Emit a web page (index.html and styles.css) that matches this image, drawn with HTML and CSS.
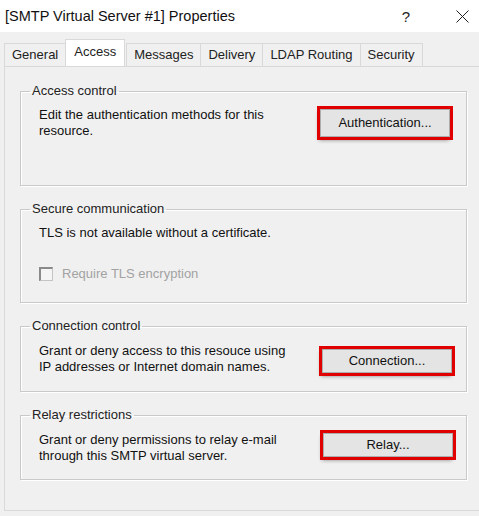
FILE: index.html
```html
<!DOCTYPE html>
<html lang="en">
<head>
  <meta charset="UTF-8">
  <title>[SMTP Virtual Server #1] Properties</title>
  <link rel="stylesheet" href="styles.css">
</head>
<body>
  <div class="titlebar">
    <div class="title">[SMTP Virtual Server #1] Properties</div>
    <div class="help">?</div>
    <div class="close">
      <svg width="13" height="13" viewBox="0 0 13 13">
        <path d="M0.5 0.5 L12.5 12.5 M12.5 0.5 L0.5 12.5" stroke="#222" stroke-width="1" fill="none"/>
      </svg>
    </div>
  </div>

  <div class="tabs">
    <div class="tab">General</div>
    <div class="tab active">Access</div>
    <div class="tab">Messages</div>
    <div class="tab">Delivery</div>
    <div class="tab">LDAP Routing</div>
    <div class="tab">Security</div>
  </div>

  <div class="panel">
    <!-- Access control -->
    <fieldset class="group group-access">
      <legend>Access control</legend>
      <div class="row">
        <div class="desc">Edit the authentication methods for this<br>resource.</div>
        <div class="btn btn-tall">Authentication...</div>
      </div>
    </fieldset>

    <!-- Secure communication -->
    <fieldset class="group group-secure">
      <legend>Secure communication</legend>
      <div class="desc">TLS is not available without a certificate.</div>
      <label class="check disabled">
        <span class="box"></span>
        Require TLS encryption
      </label>
    </fieldset>

    <!-- Connection control -->
    <fieldset class="group group-conn">
      <legend>Connection control</legend>
      <div class="row">
        <div class="desc">Grant or deny access to this resouce using<br>IP addresses or Internet domain names.</div>
        <div class="btn btn-conn">Connection...</div>
      </div>
    </fieldset>

    <!-- Relay restrictions -->
    <fieldset class="group group-relay">
      <legend>Relay restrictions</legend>
      <div class="row">
        <div class="desc">Grant or deny permissions to relay e-mail<br>through this SMTP virtual server.</div>
        <div class="btn btn-relay">Relay...</div>
      </div>
    </fieldset>
  </div>
</body>
</html>
```

FILE: styles.css
```css
body {
  margin: 0;
  padding: 0;
  background: #f0f0f0;
  font-family: 'Liberation Sans', Arial, sans-serif;
  font-size: 13px;
  color: #000;
  overflow: hidden;
}
.titlebar {
  display: flex;
  align-items: center;
  height: 32px;
  background: #fff;
}
.title {
  flex: 1;
  padding-left: 5px;
  font-size: 14.5px;
  color: #111;
}
.help {
  width: 20px;
  font-size: 15px;
  text-align: center;
  margin-right: 40px;
  color: #222;
}
.close {
  width: 13px;
  height: 13px;
  margin-right: 10px;
}
.tabs {
  display: flex;
  align-items: flex-end;
  margin-top: 8px;
  padding-left: 4px;
  height: 26px;
}
.tab {
  height: 22px;
  line-height: 22px;
  padding: 0 7px;
  border: 1px solid #d9d9d9;
  border-bottom: none;
  margin-right: -1px;
  background: #f0f0f0;
  color: #222;
}
.tab.active {
  height: 26px;
  line-height: 24px;
  background: #fff;
  position: relative;
  z-index: 1;
  margin-left: 0;
  margin-right: 1px;
  padding: 0 8px;
}
.panel {
  margin-left: 4px;
  width: 490px;
  height: 445px;
  border: 1px solid #d9d9d9;
  box-sizing: border-box;
  padding: 16px 0 0 15px;
}
.group {
  width: 447px;
  box-sizing: border-box;
  margin: 0 0 15px 0;
  border: 1px solid #c9c9c9;
  box-shadow: inset 1px 1px 0 #fff, 1px 1px 0 #fff;
  padding: 0 16px 0 18px;
  min-width: 0;
}
.group legend {
  padding: 0 2px;
  margin-left: -9px;
  line-height: 16px;
  color: #222;
}
.desc {
  line-height: 16px;
  color: #111;
}
.row {
  display: flex;
  align-items: center;
  justify-content: space-between;
}
.btn {
  width: 128px;
  height: 22px;
  line-height: 22px;
  text-align: center;
  background: #e4e4e4;
  border: 1px solid #adadad;
  outline: 3px solid #e00000;
  box-shadow: -1px 3px 4px rgba(0, 0, 0, 0.45);
  color: #111;
}
.btn-tall {
  height: 26px;
  line-height: 26px;
}
.group-access {
  height: 103px;
  padding-top: 8px;
}
.group-secure {
  height: 102px;
  padding-top: 8px;
}
.group-conn {
  height: 74px;
  padding-top: 9px;
}
.group-relay {
  height: 73px;
  padding-top: 9px;
}
.btn-conn {
  position: relative;
  top: 2px;
  left: 2px;
}
.btn-relay {
  position: relative;
  top: -3px;
  left: 3px;
}
.check {
  display: flex;
  align-items: center;
  gap: 9px;
  margin-top: 25px;
  line-height: 16px;
}
.check.disabled {
  color: #a2a2a2;
}
.box {
  width: 11px;
  height: 11px;
  border: 1px solid #c4c4c4;
  border-left: 2px solid #8a8a8a;
  border-top: 2px solid #8a8a8a;
  background: #f4f4f4;
}
```
